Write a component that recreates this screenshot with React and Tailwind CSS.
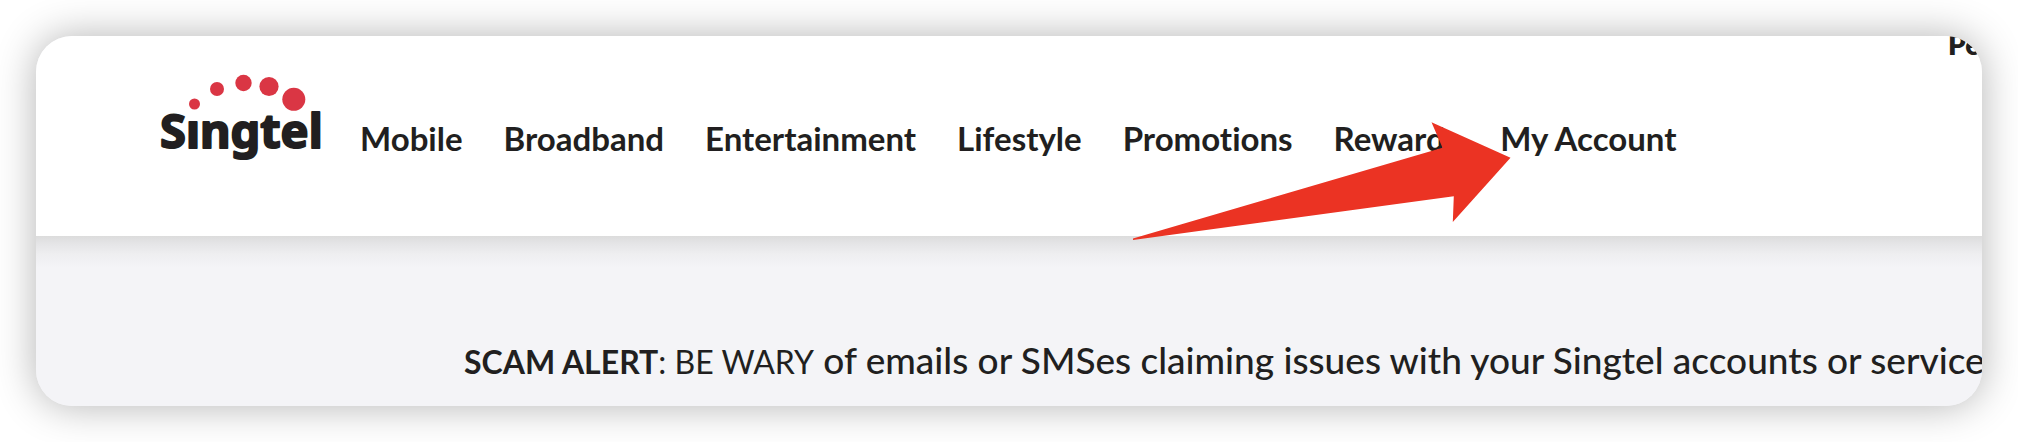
const navItems = [
    "Mobile",
    "Broadband",
    "Entertainment",
    "Lifestyle",
    "Promotions",
    "Rewards",
    "My Account",
];

function Logo() {
    return (
        <a href="#home" aria-label="Singtel" className="block shrink-0">
            <svg width="160" height="90" viewBox="0 0 160 90" className="overflow-visible">
                <g fill="#da3644">
                    <circle cx="34.5" cy="30" r="5.5" />
                    <circle cx="57" cy="15" r="7" />
                    <circle cx="83.5" cy="9" r="8.2" />
                    <circle cx="109" cy="12.5" r="9.6" />
                    <circle cx="133.8" cy="25.3" r="11.5" />
                </g>
                <text
                    x="0"
                    y="74"
                    fill="#211f20"
                    stroke="#211f20"
                    strokeWidth="2"
                    strokeLinejoin="round"
                    className="font-['Noto_Sans',sans-serif] text-[47px] font-bold"
                >
                    Sıngtel
                </text>
            </svg>
        </a>
    );
}

function Arrow() {
    return (
        <svg
            width="378"
            height="118"
            viewBox="0 0 378 118"
            aria-hidden="true"
            className="pointer-events-none absolute left-[1097px] top-[86px] z-20"
        >
            <polygon
                fill="#eb3323"
                points="0,116.4 309.5,25.7 298.5,0.3 377.5,35.7 319.8,100 320.8,74.3 0,118"
            />
        </svg>
    );
}

export default function App() {
    return (
        <div className="bg-white p-9 font-[Lato,sans-serif] text-[#211f20] [font-variant-ligatures:none]">
            <div className="relative overflow-hidden rounded-[36px] bg-[#f4f4f7] shadow-[0_0_40px_rgba(0,0,0,0.3)]">
                <header className="flex h-[200px] items-start bg-white pl-[124px]">
                    <div className="pt-[38px]">
                        <Logo />
                    </div>

                    <nav className="ml-10 flex gap-[41px] whitespace-nowrap pt-[82px] text-[33px] font-bold leading-10">
                        {navItems.map((item) => (
                            <a key={item} href="#nav">
                                {item}
                            </a>
                        ))}
                    </nav>

                    <a
                        href="#personal"
                        className="-mt-2.5 ml-auto w-[34px] text-[28px] font-extrabold leading-9"
                    >
                        Pe
                    </a>
                </header>

                <main className="bg-[linear-gradient(#dcdcdc,#e5e5e7_8px,#eeeef0_18px,#f4f4f7_32px)] pb-5 pl-[428px] pt-[98px]">
                    <p className="whitespace-nowrap text-[37px] font-medium leading-[52px]">
                        <span className="text-[32px] font-normal leading-none">
                            <strong className="font-bold">SCAM ALERT</strong>: BE WARY
                        </span>{" "}
                        of emails or SMSes claiming issues with your Singtel accounts or services
                    </p>
                </main>

                <Arrow />
            </div>
        </div>
    );
}
